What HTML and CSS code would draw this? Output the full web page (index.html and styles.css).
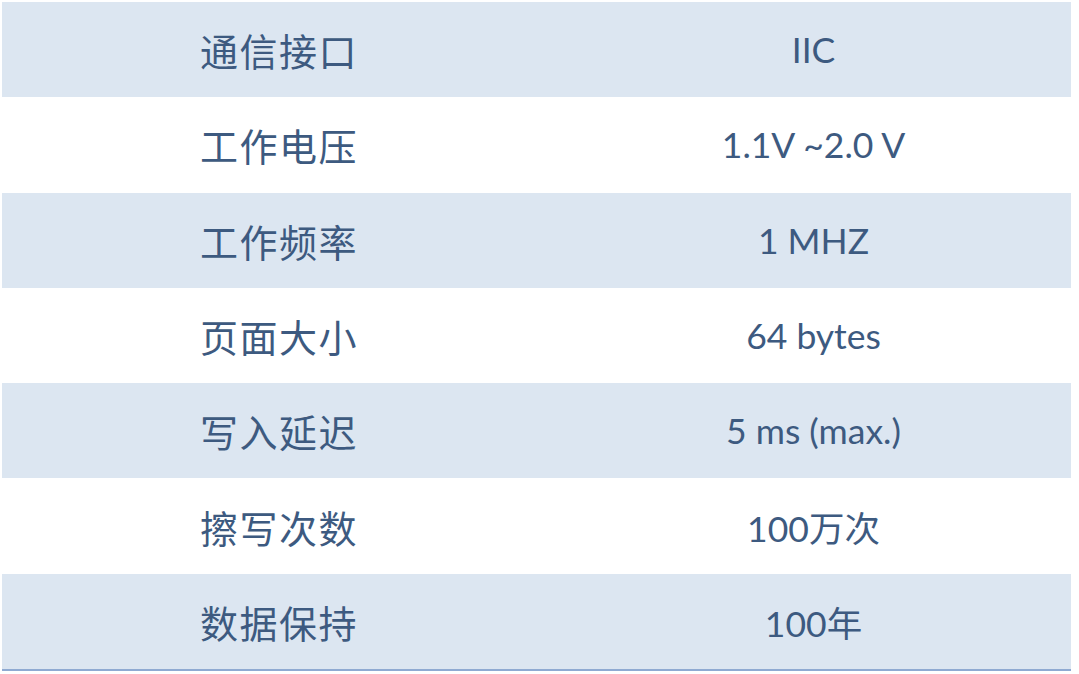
FILE: index.html
```html
<!DOCTYPE html>
<html lang="zh">
<head>
<meta charset="utf-8">
<title>参数表</title>
<link rel="stylesheet" href="styles.css">
</head>
<body>
<div class="wrap">
<table class="spec">
<colgroup><col class="ck"><col class="cv"></colgroup>
<tbody>
<tr class="shade"><td class="k">通信接口</td><td class="v">IIC</td></tr>
<tr><td class="k">工作电压</td><td class="v">1.1V ~2.0 V</td></tr>
<tr class="shade"><td class="k">工作频率</td><td class="v">1 MHZ</td></tr>
<tr><td class="k">页面大小</td><td class="v">64 bytes</td></tr>
<tr class="shade"><td class="k">写入延迟</td><td class="v">5 ms (max.)</td></tr>
<tr><td class="k">擦写次数</td><td class="v">100万次</td></tr>
<tr class="shade last"><td class="k">数据保持</td><td class="v">100年</td></tr>
</tbody>
</table>
</div>
</body>
</html>
```
FILE: styles.css
```css
html, body {
  margin: 0;
  padding: 0;
  background: #ffffff;
}
.wrap {
  padding: 2px 0 0 2px;
}
.spec {
  width: 1069px;
  border-collapse: collapse;
  table-layout: fixed;
  font-family: Lato, "Noto Sans CJK SC", sans-serif;
  color: #3d5a80;
}
.ck {
  width: 554px;
}
.cv {
  width: 515px;
}
.spec td {
  height: 95.3px;
  padding: 0;
  text-align: center;
  vertical-align: middle;
}
.spec .k {
  font-family: "Noto Sans CJK SC", sans-serif;
  font-size: 38px;
  letter-spacing: 1.5px;
}
.spec .v {
  font-size: 35.5px;
}
.shade td {
  background: #dce6f1;
}
.last td {
  border-bottom: 2px solid #8faad2;
}
```
